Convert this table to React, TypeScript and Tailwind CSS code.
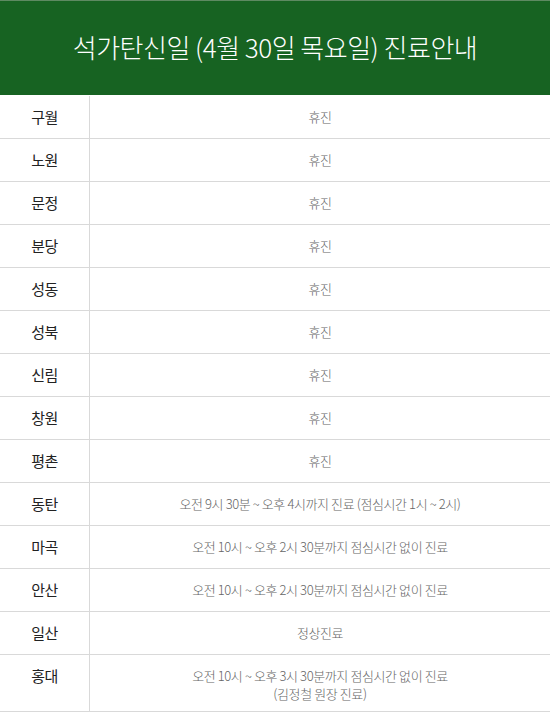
import React from "react";

const rows: { name: string; info: string[] }[] = [
  { name: "구월", info: ["휴진"] },
  { name: "노원", info: ["휴진"] },
  { name: "문정", info: ["휴진"] },
  { name: "분당", info: ["휴진"] },
  { name: "성동", info: ["휴진"] },
  { name: "성북", info: ["휴진"] },
  { name: "신림", info: ["휴진"] },
  { name: "창원", info: ["휴진"] },
  { name: "평촌", info: ["휴진"] },
  { name: "동탄", info: ["오전 9시 30분 ~ 오후 4시까지 진료 (점심시간 1시 ~ 2시)"] },
  { name: "마곡", info: ["오전 10시 ~ 오후 2시 30분까지 점심시간 없이 진료"] },
  { name: "안산", info: ["오전 10시 ~ 오후 2시 30분까지 점심시간 없이 진료"] },
  { name: "일산", info: ["정상진료"] },
  {
    name: "홍대",
    info: ["오전 10시 ~ 오후 3시 30분까지 점심시간 없이 진료", "(김정철 원장 진료)"],
  },
];

function App() {
  return (
    <div
      className="w-[550px] h-[720px] bg-white overflow-hidden"
      style={{ fontFamily: '"Noto Sans CJK KR", "Noto Sans", sans-serif' }}
    >
      <div className="h-[95px] bg-[#176322] border-t border-[#5e8a62] flex items-center justify-center">
        <h1 className="text-white text-[26px] font-light tracking-[-0.5px] leading-none pb-[3px]">
          석가탄신일 (4월 30일 목요일) 진료안내
        </h1>
      </div>
      <div className="pt-[1px]">
        {rows.map((row) => (
          <div
            key={row.name}
            className={`flex border-b border-[#d9d9d9] ${
              row.info.length > 1 ? "h-[57px]" : "h-[43px]"
            }`}
          >
            <div className="w-[90px] shrink-0 border-r border-[#d9d9d9] flex justify-center pt-[11px] text-[15px] text-[#222] leading-[20px] tracking-[-0.5px]">
              {row.name}
            </div>
            <div className="flex-1 flex flex-col items-center pt-[12px] text-[13px] font-light text-[#666] leading-[18px] tracking-[-0.4px]">
              {row.info.map((line) => (
                <span key={line}>{line}</span>
              ))}
            </div>
          </div>
        ))}
      </div>
    </div>
  );
}

export default App;
